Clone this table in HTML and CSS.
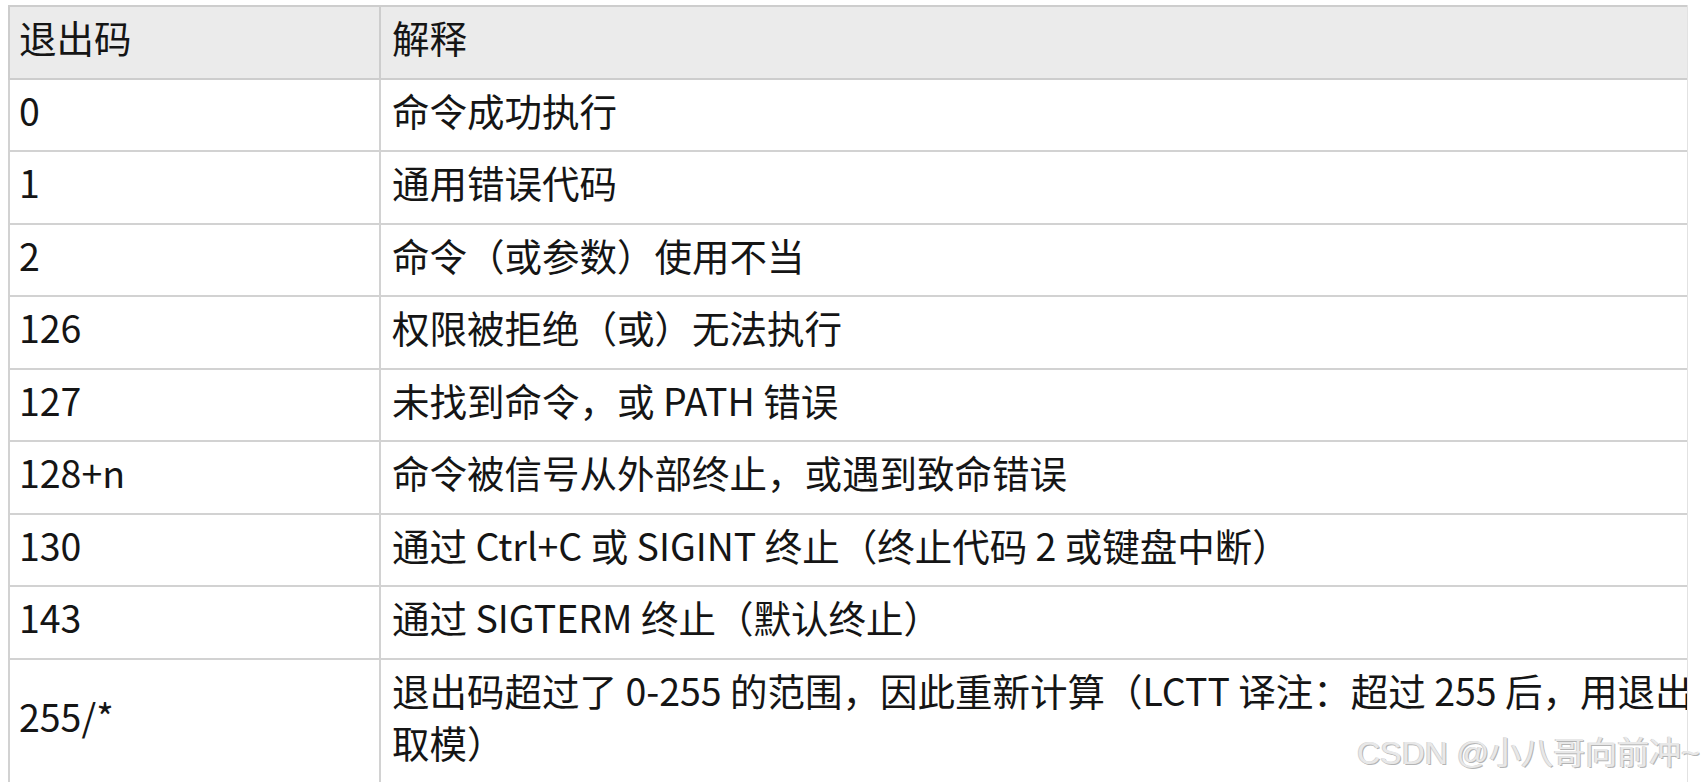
FILE: index.html
```html
<!DOCTYPE html>
<html lang="zh-CN">
<head>
<meta charset="utf-8">
<title>退出码</title>
<link rel="stylesheet" href="styles.css">
</head>
<body>
<div class="frame">
  <table class="codes">
    <thead>
      <tr><th class="c1">退出码</th><th class="c2">解释</th></tr>
    </thead>
    <tbody>
      <tr><td>0</td><td>命令成功执行</td></tr>
      <tr><td>1</td><td>通用错误代码</td></tr>
      <tr><td>2</td><td>命令（或参数）使用不当</td></tr>
      <tr><td>126</td><td>权限被拒绝（或）无法执行</td></tr>
      <tr><td>127</td><td>未找到命令，或 PATH 错误</td></tr>
      <tr><td>128+n</td><td>命令被信号从外部终止，或遇到致命错误</td></tr>
      <tr><td>130</td><td>通过 Ctrl+C 或 SIGINT 终止（终止代码 2 或键盘中断）</td></tr>
      <tr><td>143</td><td>通过 SIGTERM 终止（默认终止）</td></tr>
      <tr><td>255/*</td><td>退出码超过了 0-255 的范围，因此重新计算（LCTT 译注：超过 255 后，用退出码取模）</td></tr>
    </tbody>
  </table>
</div>
<div class="watermark">CSDN @小八哥向前冲~</div>
</body>
</html>
```

FILE: styles.css
```css
html, body {
  margin: 0;
  padding: 0;
  background: #ffffff;
  overflow: hidden;
}
body {
  width: 1704px;
  height: 782px;
  position: relative;
  font-family: "Noto Sans CJK SC", "Noto Sans", sans-serif;
  color: #151515;
}
.frame {
  margin: 5px 0 0 8px;
  width: 1679px;
  overflow: hidden;
  border-right: 1px solid #e2e2e2;
}
.codes {
  border-collapse: collapse;
  width: 1745px;
  table-layout: fixed;
  font-size: 37.5px;
  line-height: 52.5px;
}
.codes th, .codes td {
  border: 2px solid #d2d2d2;
  padding: 4px 11px 14px 11px;
  text-align: left;
  font-weight: 400;
  vertical-align: middle;
}
.codes th:first-child, .codes td:first-child {
  padding-left: 9px;
}
.codes thead th {
  background: #ebebeb;
  border-color: #cdcdcd;
}
.c1 { width: 349px; }
.watermark {
  position: absolute;
  right: 4px;
  bottom: 10px;
  font-family: "Liberation Sans", "Noto Sans CJK SC", sans-serif;
  font-size: 32px;
  line-height: 38px;
  color: #e8e8e8;
  text-shadow: 1px 1px 0 #b4b4b4, -1px 0 0 #d2d2d2;
  white-space: nowrap;
}
```
